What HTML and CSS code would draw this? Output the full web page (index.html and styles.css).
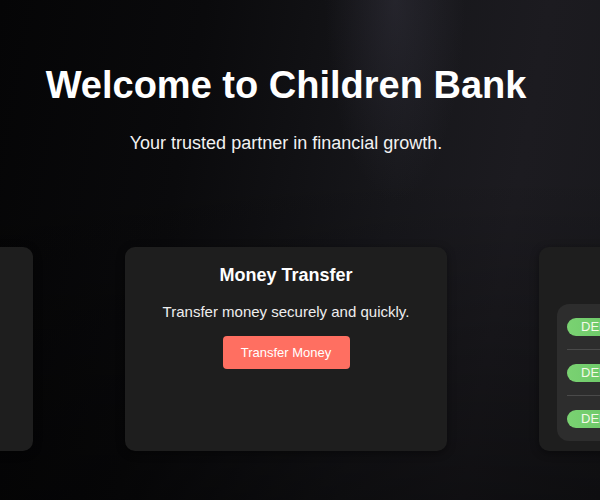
FILE: index.html
```html
<!DOCTYPE html>
<html lang="en">
<head>
<meta charset="utf-8">
<title>Children Bank</title>
<link rel="stylesheet" href="styles.css">
</head>
<body>
<main class="page">
  <header class="hero">
    <h1 class="hero-title">Welcome to Children Bank</h1>
    <p class="hero-sub">Your trusted partner in financial growth.</p>
  </header>
  <section class="carousel">
    <article class="card">
      <h3 class="card-title">Savings Account</h3>
      <p class="card-text">Grow your savings with great rates.</p>
      <button class="btn">Open Account</button>
    </article>
    <article class="card">
      <h3 class="card-title">Money Transfer</h3>
      <p class="card-text">Transfer money securely and quickly.</p>
      <button class="btn">Transfer Money</button>
    </article>
    <article class="card">
      <h3 class="card-title">Recent Transactions</h3>
      <ul class="tx-list">
        <li class="tx-row"><span class="pill">DEPOSIT</span><span class="tx-amt">$50.00</span></li>
        <li class="tx-row"><span class="pill">DEPOSIT</span><span class="tx-amt">$20.00</span></li>
        <li class="tx-row"><span class="pill">DEPOSIT</span><span class="tx-amt">$15.00</span></li>
      </ul>
    </article>
  </section>
</main>
</body>
</html>
```
FILE: styles.css
```css
html, body {
  margin: 0;
  height: 100%;
}
body {
  overflow: hidden;
  font-family: "Liberation Sans", Arial, sans-serif;
  color: #fff;
  background:
    radial-gradient(ellipse 70px 200px at 395px 0px, rgba(70, 68, 84, 0.32), rgba(70, 68, 84, 0) 100%),
    linear-gradient(180deg, rgba(0, 0, 0, 0) 0%, rgba(0, 0, 0, 0) 35%, rgba(0, 0, 0, 0.45) 100%),
    linear-gradient(100deg, #050506 0%, #0a0a0c 30%, #17171b 62%, #1c1b20 80%, #19191d 100%);
}
.page {
  width: 572px;
  display: flex;
  flex-direction: column;
  align-items: center;
}
.hero {
  text-align: center;
  padding-top: 63px;
}
.hero-title {
  margin: 0;
  font-size: 38px;
  font-weight: bold;
  line-height: 44px;
}
.hero-sub {
  margin: 26px 0 0;
  font-size: 18px;
  line-height: 20px;
  color: #f2f2f2;
}
.carousel {
  width: 572px;
  margin-top: 94px;
  display: flex;
  justify-content: center;
  gap: 92px;
}
.card {
  flex: 0 0 322px;
  height: 204px;
  box-sizing: border-box;
  background: #1e1e1e;
  border-radius: 10px;
  padding: 18px 18px 12px;
  text-align: center;
  box-shadow: 0 2px 8px rgba(0, 0, 0, 0.4);
}
.card-title {
  margin: 0;
  font-size: 18px;
  line-height: 21px;
  font-weight: bold;
}
.card-text {
  margin: 17px 0 0;
  font-size: 15px;
  line-height: 18px;
  color: #eee;
}
.btn {
  margin-top: 15px;
  width: 127px;
  height: 33px;
  border: none;
  border-radius: 4px;
  background: #ff6f61;
  color: #fff;
  font-family: "Liberation Sans", Arial, sans-serif;
  font-size: 13px;
}
.tx-list {
  list-style: none;
  margin: 18px 0 0;
  padding: 0 10px;
  background: #2d2d2d;
  border-radius: 12px;
  text-align: left;
}
.tx-row {
  height: 45px;
  display: flex;
  align-items: center;
  justify-content: space-between;
  border-bottom: 1px solid #4a4a4a;
}
.tx-row:last-child {
  border-bottom: none;
}
.pill {
  height: 18px;
  line-height: 18px;
  padding: 0 14px;
  border-radius: 9px;
  background: linear-gradient(90deg, #7ad272, #5fc05f);
  color: #f4f9e8;
  font-size: 13px;
}
.tx-amt {
  font-size: 14px;
}
```
